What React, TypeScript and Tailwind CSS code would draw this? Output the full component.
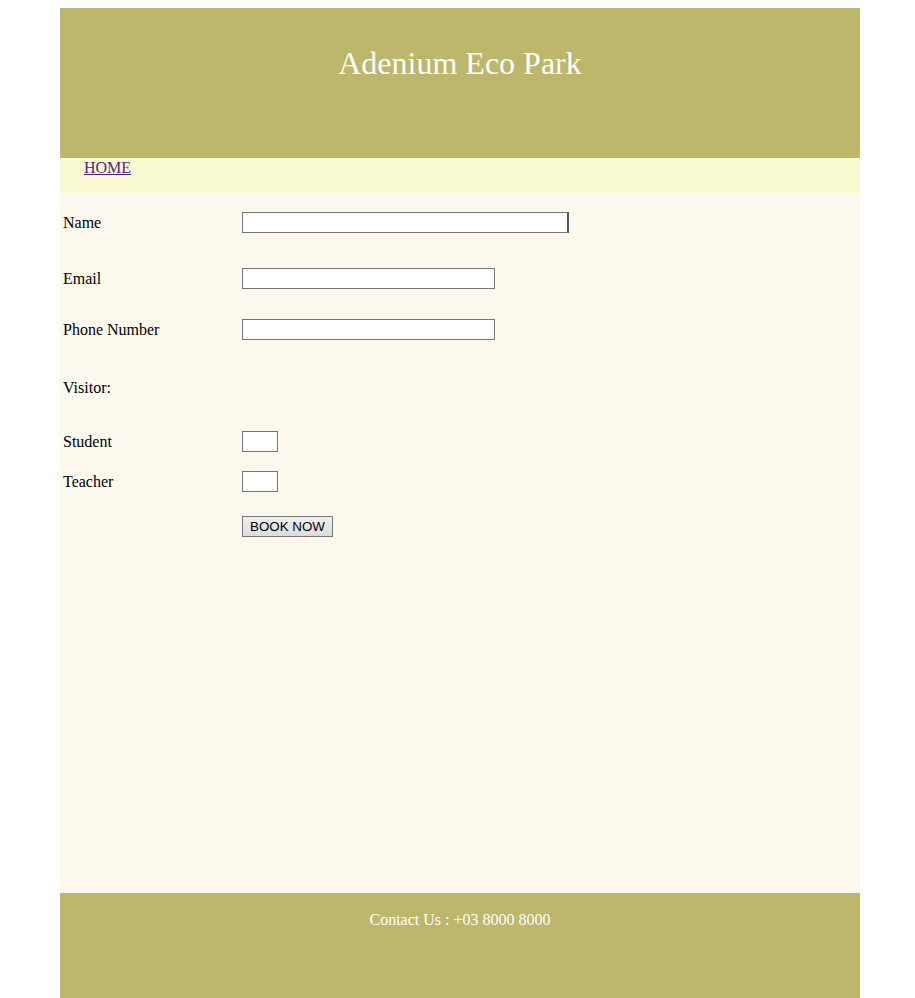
export default function App() {
  const serif = { fontFamily: '"Liberation Serif", "Times New Roman", serif' };
  const rowLabel = "w-[179px] text-[16px] text-black leading-[18px]";
  return (
    <div className="min-h-[998px] bg-white pt-2" style={serif}>
      <div className="mx-auto w-[800px] ml-[60px]">
        <header className="h-[150px] bg-[#BDB76B] pt-[37px] text-center">
          <h1 className="text-[32px] leading-[37px] text-white">Adenium Eco Park</h1>
        </header>
        <nav className="h-[35px] bg-[#FAFAD2] pl-[24px] pt-[4px]">
          <div className="leading-[12px]">
            <a href="#" className="text-[16px] leading-[12px] text-[#551A8B] underline">HOME</a>
          </div>
        </nav>
        <main className="h-[700px] bg-[#FDF9EF] pl-[3px] pt-[19px]">
          <div className="flex h-[21px] items-center">
            <span className={rowLabel}>Name</span>
            <input className="h-[21px] w-[327px] border border-[#767676] border-r-2 border-r-[#555] bg-white" />
          </div>
          <div className="mt-[35px] flex h-[21px] items-center">
            <span className={rowLabel}>Email</span>
            <input className="h-[21px] w-[253px] border border-[#767676] bg-white" />
          </div>
          <div className="mt-[30px] flex h-[21px] items-center">
            <span className={rowLabel}>Phone Number</span>
            <input className="h-[21px] w-[253px] border border-[#767676] bg-white" />
          </div>
          <div className="mt-[37px] flex h-[21px] items-center">
            <span className={rowLabel}>Visitor:</span>
          </div>
          <div className="mt-[33px] flex h-[21px] items-center">
            <span className={rowLabel}>Student</span>
            <input className="h-[21px] w-[36px] border border-[#767676] bg-white" />
          </div>
          <div className="mt-[19px] flex h-[21px] items-center">
            <span className={rowLabel}>Teacher</span>
            <input className="h-[21px] w-[36px] border border-[#767676] bg-white" />
          </div>
          <div className="mt-[24px] flex h-[21px] items-center">
            <span className={rowLabel}></span>
            <button
              className="h-[21px] w-[91px] border border-[#767676] bg-gradient-to-b from-[#f0f0f0] to-[#dcdcdc] text-[13.33px] leading-[15px] text-black"
              style={{ fontFamily: '"Liberation Sans", Arial, sans-serif' }}
            >
              BOOK NOW
            </button>
          </div>
        </main>
        <footer className="h-[105px] bg-[#BDB76B] pt-[18px] text-center">
          <p className="text-[16px] leading-[18px] text-white">Contact Us : +03 8000 8000</p>
        </footer>
      </div>
    </div>
  );
}
